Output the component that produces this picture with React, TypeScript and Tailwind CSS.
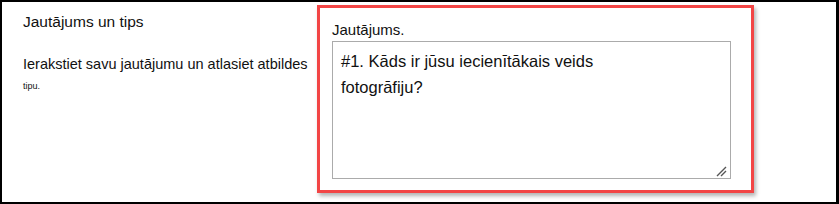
export default function App() {
  return (
    <div
      className="flex h-[204px] w-[839px] border-2 border-r-[3px] border-black bg-white text-[#111]"
      style={{ fontFamily: '"Liberation Sans", Arial, sans-serif' }}
    >
      {/* Left description column */}
      <div className="w-[315px] shrink-0 pl-[21px] pt-[10px]">
        <div className="text-[15.5px] leading-[20px]">Jautājums un tips</div>
        <div className="mt-[22px] text-[14.5px] leading-[20px]">
          Ierakstiet savu jautājumu un atlasiet atbildes
        </div>
        <div className="mt-[6px] text-[9px] leading-[12px]">tipu.</div>
      </div>

      {/* Highlighted question field */}
      <div className="mt-[3px] h-[188px] w-[437px] border-[3px] border-[#f24545] pl-[12px] pr-[20px] pt-[12px] shadow-[2px_3px_4px_rgba(0,0,0,0.3)]">
        <div className="text-[15px] leading-[20px]">Jautājums.</div>
        <div className="relative mt-[1px] h-[138px] w-[399px] border border-[#ababab] bg-white pl-[8px] pt-[6px] text-[16.5px] leading-[26px]">
          #1. Kāds ir jūsu iecienītākais veids
          <br />
          fotogrāfiju?
          <svg
            className="absolute bottom-[1px] right-[3px]"
            width="11"
            height="11"
            viewBox="0 0 11 11"
          >
            <path d="M1 10 L10 1 M5 10 L10 5" stroke="#555" strokeWidth="1.4" />
          </svg>
        </div>
      </div>
    </div>
  )
}
